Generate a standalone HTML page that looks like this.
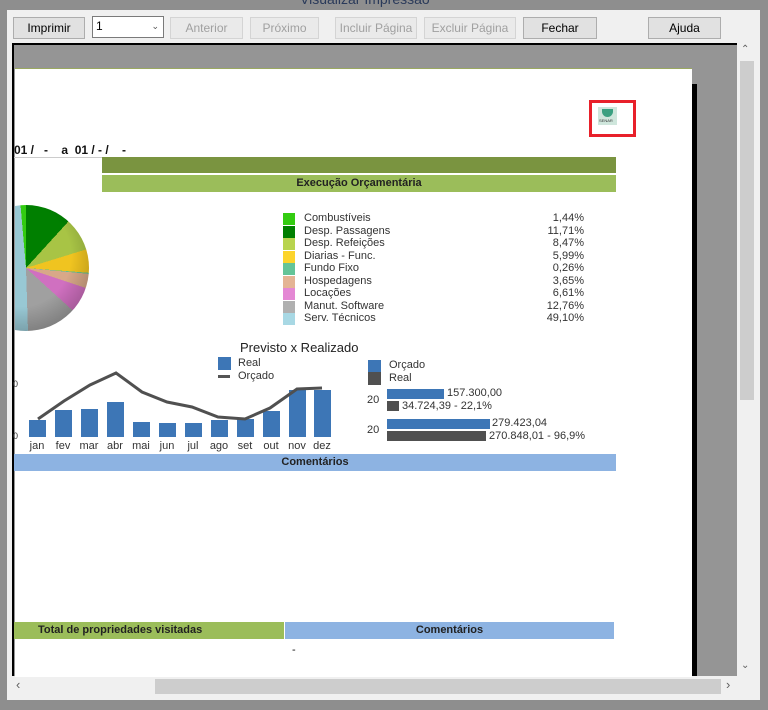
<!DOCTYPE html>
<html><head><meta charset="utf-8"><style>
*{margin:0;padding:0;box-sizing:border-box}
body{width:768px;height:710px;background:#8e8e8e;position:relative;overflow:hidden;font-family:"Liberation Sans",Arial,sans-serif}
.a{position:absolute}
.btn{position:absolute;top:17px;height:22px;border:1px solid #adadad;background:#e1e1e1;font-size:12px;text-align:center;line-height:20px;color:#000}
.dis{color:#a0a0a0;border-color:#d4d4d4;background:#eaeaea}
.t{position:absolute;font-size:11px;color:#333;white-space:nowrap}
.sq{position:absolute;width:12px;height:12px}
.b{position:absolute;background:#3d76b6}
.m{position:absolute;top:440px;font-size:11px;color:#333;width:26px;text-align:center}
</style></head><body>
<div class="a" style="left:300px;top:-9px;font-size:14px;color:#2a3a5a">Visualizar Impressão</div>
<div class="a" style="left:7px;top:10px;width:753px;height:690px;background:#f0f0f0"></div>
<div class="btn" style="left:13px;width:72px">Imprimir</div>
<div class="a" style="left:92px;top:16px;width:72px;height:22px;border:1px solid #7a7a7a;background:#fff;font-size:12px;padding-left:3px;line-height:18px">1<span style="position:absolute;right:4px;top:0;font-size:9px;color:#555">&#8964;</span></div>
<div class="btn dis" style="left:170px;width:73px">Anterior</div>
<div class="btn dis" style="left:250px;width:69px">Próximo</div>
<div class="btn dis" style="left:335px;width:82px">Incluir Página</div>
<div class="btn dis" style="left:424px;width:92px">Excluir Página</div>
<div class="btn" style="left:523px;width:74px">Fechar</div>
<div class="btn" style="left:648px;width:73px">Ajuda</div>
<!-- viewport -->
<div class="a" style="left:12px;top:43px;width:726px;height:633px;background:#959595;border-top:2px solid #000;border-left:2px solid #000"></div>
<div class="a" style="left:15px;top:68px;width:677px;height:610px;background:#fff;border-top:1px solid #9aa860"></div>
<div class="a" style="left:692px;top:84px;width:5px;height:592px;background:#000"></div>
<!-- scrollbars -->
<div class="a" style="left:737px;top:43px;width:20px;height:634px;background:#f0f0f0"></div>
<div class="a" style="left:740px;top:61px;width:14px;height:339px;background:#cdcdcd"></div>
<div class="a" style="left:741px;top:44px;font-size:10px;color:#606060">&#8963;</div>
<div class="a" style="left:741px;top:660px;font-size:10px;color:#606060">&#8964;</div>
<div class="a" style="left:12px;top:677px;width:726px;height:18px;background:#f0f0f0"></div>
<div class="a" style="left:155px;top:679px;width:566px;height:15px;background:#cdcdcd"></div>
<div class="a" style="left:16px;top:677px;font-size:13px;color:#606060">&#8249;</div>
<div class="a" style="left:726px;top:677px;font-size:13px;color:#606060">&#8250;</div>
<div class="a" style="left:0;top:700px;width:768px;height:10px;background:#8e8e8e"></div>
<!-- logo -->
<div class="a" style="left:589px;top:100px;width:47px;height:37px;border:3px solid #e8202a"></div>
<div class="a" style="left:598px;top:107px;width:19px;height:18px;background:#cfe6dc"><div class="a" style="left:4px;top:2px;width:11px;height:8px;background:#3aa080;border-radius:0 0 6px 6px"></div><div class="a" style="left:1px;top:11px;font-size:4px;color:#333">SENAR</div></div>
<!-- date -->
<div class="a" style="left:14px;top:143px;font-size:12px;font-weight:bold;color:#111;white-space:pre">01 /   -    a  01 / - /    -</div>
<div class="a" style="left:14px;top:157px;width:88px;height:1px;background:#ccc"></div>
<div class="a" style="left:102px;top:157px;width:514px;height:16px;background:#7a9440"></div>
<div class="a" style="left:102px;top:175px;width:514px;height:17px;background:#9bbd5a;font-size:11px;font-weight:bold;text-align:center;line-height:17px;color:#222">Execução Orçamentária</div>
<!-- pie -->
<div class="a" style="left:15px;top:202px;width:80px;height:132px;overflow:hidden">
<div class="a" style="left:-52px;top:3px;width:126px;height:126px;border-radius:50%;background:conic-gradient(from -5deg,#33cc11 0 1.44%,#007f00 1.44% 13.15%,#a8c445 13.15% 21.62%,#f0c420 21.62% 27.61%,#60c090 27.61% 27.87%,#d8a888 27.87% 31.52%,#d070c0 31.52% 38.13%,#a0a0a0 38.13% 50.89%,#98c8d4 50.89% 100%)"></div>
<div class="a" style="left:-52px;top:3px;width:126px;height:126px;border-radius:50%;background:radial-gradient(circle at 45% 40%,rgba(255,255,255,0) 50%,rgba(0,0,0,.4) 100%)"></div>
</div>
<!-- legend -->
<div class="sq" style="left:283px;top:213px;background:#33cc11"></div><div class="t" style="left:304px;top:212px">Combustíveis</div><div class="t" style="left:520px;top:212px;width:64px;text-align:right">1,44%</div>
<div class="sq" style="left:283px;top:225.5px;background:#007f00"></div><div class="t" style="left:304px;top:224.5px">Desp. Passagens</div><div class="t" style="left:520px;top:224.5px;width:64px;text-align:right">11,71%</div>
<div class="sq" style="left:283px;top:238px;background:#b8d44e"></div><div class="t" style="left:304px;top:237px">Desp. Refeições</div><div class="t" style="left:520px;top:237px;width:64px;text-align:right">8,47%</div>
<div class="sq" style="left:283px;top:250.5px;background:#fcd42c"></div><div class="t" style="left:304px;top:249.5px">Diarias - Func.</div><div class="t" style="left:520px;top:249.5px;width:64px;text-align:right">5,99%</div>
<div class="sq" style="left:283px;top:263px;background:#64c498"></div><div class="t" style="left:304px;top:262px">Fundo Fixo</div><div class="t" style="left:520px;top:262px;width:64px;text-align:right">0,26%</div>
<div class="sq" style="left:283px;top:275.5px;background:#e4b494"></div><div class="t" style="left:304px;top:274.5px">Hospedagens</div><div class="t" style="left:520px;top:274.5px;width:64px;text-align:right">3,65%</div>
<div class="sq" style="left:283px;top:288px;background:#e488d4"></div><div class="t" style="left:304px;top:287px">Locações</div><div class="t" style="left:520px;top:287px;width:64px;text-align:right">6,61%</div>
<div class="sq" style="left:283px;top:300.5px;background:#b0b0b0"></div><div class="t" style="left:304px;top:299.5px">Manut. Software</div><div class="t" style="left:520px;top:299.5px;width:64px;text-align:right">12,76%</div>
<div class="sq" style="left:283px;top:313px;background:#a8d8e4"></div><div class="t" style="left:304px;top:312px">Serv. Técnicos</div><div class="t" style="left:520px;top:312px;width:64px;text-align:right">49,10%</div>
<!-- bar chart -->
<div class="t" style="left:240px;top:340px;font-size:13px;color:#222">Previsto x Realizado</div>
<div class="sq" style="left:218px;top:357px;width:13px;height:13px;background:#3d76b6"></div><div class="t" style="left:238px;top:357px">Real</div>
<div class="a" style="left:218px;top:375px;width:12px;height:3px;background:#555"></div><div class="t" style="left:238px;top:370px">Orçado</div>
<div class="t" style="left:13px;top:379px;font-size:9px">0</div><div class="t" style="left:13px;top:431px;font-size:9px">0</div>
<div class="b" style="left:29px;top:420px;width:17px;height:17px"></div>
<div class="b" style="left:55px;top:410px;width:17px;height:27px"></div>
<div class="b" style="left:81px;top:409px;width:17px;height:28px"></div>
<div class="b" style="left:107px;top:402px;width:17px;height:35px"></div>
<div class="b" style="left:133px;top:422px;width:17px;height:15px"></div>
<div class="b" style="left:159px;top:423px;width:17px;height:14px"></div>
<div class="b" style="left:185px;top:423px;width:17px;height:14px"></div>
<div class="b" style="left:211px;top:420px;width:17px;height:17px"></div>
<div class="b" style="left:237px;top:419px;width:17px;height:18px"></div>
<div class="b" style="left:263px;top:411px;width:17px;height:26px"></div>
<div class="b" style="left:289px;top:390px;width:17px;height:47px"></div>
<div class="b" style="left:314px;top:390px;width:17px;height:47px"></div>
<svg class="a" style="left:0;top:0" width="400" height="460"><polyline points="38,419 64,401 90,385 116,373 142,392 167,402 192,407 218,417 245,419 270,408 297,389 322,388" fill="none" stroke="#505050" stroke-width="3"/></svg>
<div class="m" style="left:24px">jan</div><div class="m" style="left:50px">fev</div><div class="m" style="left:76px">mar</div><div class="m" style="left:102px">abr</div><div class="m" style="left:128px">mai</div><div class="m" style="left:154px">jun</div><div class="m" style="left:180px">jul</div><div class="m" style="left:206px">ago</div><div class="m" style="left:232px">set</div><div class="m" style="left:258px">out</div><div class="m" style="left:284px">nov</div><div class="m" style="left:309px">dez</div>
<!-- right chart -->
<div class="sq" style="left:368px;top:360px;width:13px;height:12px;background:#3d76b6"></div><div class="t" style="left:389px;top:359px">Orçado</div>
<div class="sq" style="left:368px;top:372px;width:13px;height:13px;background:#505050"></div><div class="t" style="left:389px;top:372px">Real</div>
<div class="t" style="left:367px;top:394px">20</div>
<div class="b" style="left:387px;top:389px;width:57px;height:10px"></div><div class="t" style="left:447px;top:387px">157.300,00</div>
<div class="a" style="left:387px;top:401px;width:12px;height:10px;background:#505050"></div><div class="t" style="left:402px;top:400px">34.724,39 - 22,1%</div>
<div class="t" style="left:367px;top:424px">20</div>
<div class="b" style="left:387px;top:419px;width:103px;height:10px"></div><div class="t" style="left:492px;top:417px">279.423,04</div>
<div class="a" style="left:387px;top:431px;width:99px;height:10px;background:#505050"></div><div class="t" style="left:489px;top:430px">270.848,01 - 96,9%</div>
<div class="a" style="left:14px;top:454px;width:602px;height:17px;background:#8db3e2;font-size:11px;font-weight:bold;text-align:center;line-height:17px;color:#222">Comentários</div>
<div class="a" style="left:14px;top:622px;width:270px;height:17px;background:#9bbd5a;font-size:11px;font-weight:bold;line-height:17px;color:#222;padding-left:24px">Total de propriedades visitadas</div>
<div class="a" style="left:285px;top:622px;width:329px;height:17px;background:#8db3e2;font-size:11px;font-weight:bold;text-align:center;line-height:17px;color:#222">Comentários</div>
<div class="t" style="left:292px;top:644px;color:#111">-</div>
</body></html>
